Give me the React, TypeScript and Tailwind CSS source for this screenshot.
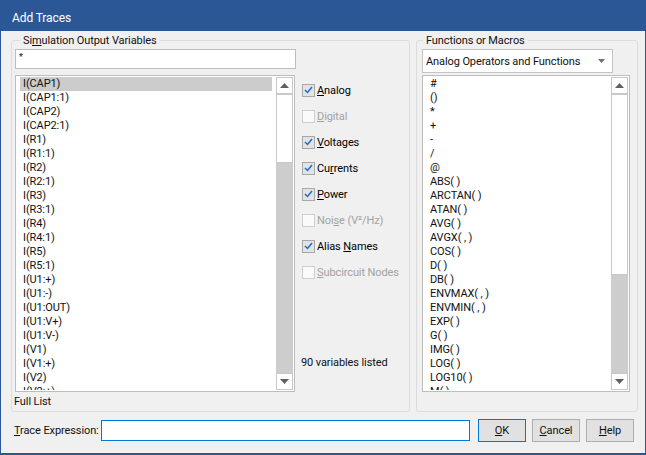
import React from "react";

const leftItems = [
  "I(CAP1)", "I(CAP1:1)", "I(CAP2)", "I(CAP2:1)", "I(R1)", "I(R1:1)", "I(R2)", "I(R2:1)",
  "I(R3)", "I(R3:1)", "I(R4)", "I(R4:1)", "I(R5)", "I(R5:1)", "I(U1:+)", "I(U1:-)",
  "I(U1:OUT)", "I(U1:V+)", "I(U1:V-)", "I(V1)", "I(V1:+)", "I(V2)", "I(V2:+)",
];

const rightItems = [
  "#", "()", "*", "+", "-", "/", "@", "ABS( )", "ARCTAN( )", "ATAN( )", "AVG( )", "AVGX( , )",
  "COS( )", "D( )", "DB( )", "ENVMAX( , )", "ENVMIN( , )", "EXP( )", "G( )", "IMG( )", "LOG( )",
  "LOG10( )", "M( )",
];

function UpArrow() {
  return (
    <svg width="9" height="5" viewBox="0 0 9 5">
      <path d="M0 5 L4.5 0 L9 5 Z" fill="#606060" />
    </svg>
  );
}
function DownArrow() {
  return (
    <svg width="9" height="5" viewBox="0 0 9 5">
      <path d="M0 0 L4.5 5 L9 0 Z" fill="#606060" />
    </svg>
  );
}

function ScrollBar({ thumbClass }: { thumbClass: string }) {
  return (
    <div className="w-[17px] h-full flex flex-col shrink-0">
      <div className="h-[17px] border border-[#c8c8c8] bg-white flex items-center justify-center shrink-0">
        <UpArrow />
      </div>
      <div className={`${thumbClass} border border-[#c8c8c8] bg-white shrink-0`} />
      <div className="flex-1 bg-[#cdcdcd]" />
      <div className="h-[17px] border border-[#c8c8c8] bg-white flex items-center justify-center shrink-0">
        <DownArrow />
      </div>
    </div>
  );
}

function Check({ checked, label }: { checked: boolean; label: React.ReactNode }) {
  return (
    <div className="h-[26px] flex items-center">
      <div
        className={
          checked
            ? "w-[13px] h-[13px] border border-[#a8a8a8] bg-[#e3e3e3] flex items-center justify-center"
            : "w-[13px] h-[13px] border border-[#cfcfcf] bg-[#fafafa]"
        }
      >
        {checked && (
          <svg width="9" height="8" viewBox="0 0 9 8">
            <path d="M1 4 L3.5 6.5 L8 1" stroke="#1a6fd0" strokeWidth="1.5" fill="none" />
          </svg>
        )}
      </div>
      <span className={checked ? "ml-[2px] text-black whitespace-nowrap" : "ml-[2px] text-[#a2a2a2] whitespace-nowrap"}>{label}</span>
    </div>
  );
}

export default function App() {
  return (
    <div className="w-[646px] h-[455px] bg-[#f0f0f0] border-l border-r border-b-2 border-[#2b5797] flex flex-col font-['Roboto',sans-serif] text-[11px] leading-[15px] tracking-[-0.1px] text-[#111] overflow-hidden">
      <div className="h-[31px] shrink-0 bg-[#2b5797] text-white text-[12px] pl-[11px] pt-[11px]">
        Add Traces
      </div>
      <div className="flex pl-[10px] pt-[2px] gap-[6px]">
        <fieldset className="w-[399px] h-[379px] border border-[#dcdcdc] rounded-[3px] shrink-0">
          <legend className="ml-[8px] px-[3px]">
            Si<span className="underline">m</span>ulation Output Variables
          </legend>
          <div className="pl-[3px] flex flex-col">
            <div className="mt-[1px] w-[281px] h-[20px] border border-[#bdbdbd] bg-white pl-[3px] text-[9px] leading-[14px]">
              *
            </div>
            <div className="mt-[6px] flex">
              <div className="flex flex-col">
                <div className="w-[280px] h-[317px] border border-[#bdbdbd] bg-white p-[1px] flex overflow-hidden">
                  <div className="flex-1 pl-[3px] pr-[4px] overflow-hidden">
                    {leftItems.map((t, i) => (
                      <div
                        key={t}
                        className={i === 0 ? "h-[14px] leading-[14px] pl-[3px] bg-[#cccccc]" : "h-[14px] leading-[14px] pl-[3px]"}
                      >
                        {t}
                      </div>
                    ))}
                  </div>
                  <ScrollBar thumbClass="h-[69px]" />
                </div>
                <div className="mt-[2px] -ml-[1px]">Full List</div>
              </div>
              <div className="ml-[7px] pt-[2px] flex flex-col">
                <Check checked label={<><span className="underline">A</span>nalog</>} />
                <Check checked={false} label={<><span className="underline">D</span>igital</>} />
                <Check checked label={<><span className="underline">V</span>oltages</>} />
                <Check checked label={<>Cu<span className="underline">r</span>rents</>} />
                <Check checked label={<><span className="underline">P</span>ower</>} />
                <Check checked={false} label={<>Noi<span className="underline">s</span>e (V²/Hz)</>} />
                <Check checked label={<>Alias <span className="underline">N</span>ames</>} />
                <Check checked={false} label={<><span className="underline">S</span>ubcircuit Nodes</>} />
                <div className="mt-[70px] -ml-[1px] whitespace-nowrap">90 variables listed</div>
              </div>
            </div>
          </div>
        </fieldset>
        <fieldset className="w-[222px] h-[379px] border border-[#dcdcdc] rounded-[3px] shrink-0">
          <legend className="ml-[6px] px-[3px]">Functions or Macros</legend>
          <div className="pl-[5px] flex flex-col">
            <div className="mt-[1px] w-[191px] h-[24px] border border-[#c4c4c4] bg-white flex items-center pl-[3px] pr-[7px]">
              <span className="flex-1 whitespace-nowrap">Analog Operators and Functions</span>
              <svg width="7" height="4" viewBox="0 0 7 4">
                <path d="M0 0 L3.5 4 L7 0 Z" fill="#707070" />
              </svg>
            </div>
            <div className="mt-[2px] w-[208px] h-[317px] border border-[#bdbdbd] bg-white p-[1px] flex overflow-hidden">
              <div className="flex-1 pl-[3px] pr-[4px] overflow-hidden">
                {rightItems.map((t) => (
                  <div key={t} className="h-[14px] leading-[14px] pl-[3px]">
                    {t}
                  </div>
                ))}
              </div>
              <ScrollBar thumbClass="h-[181px]" />
            </div>
          </div>
        </fieldset>
      </div>
      <div className="flex items-center pl-[13px] mt-[7px]">
        <div className="w-[87px] whitespace-nowrap">
          <span className="underline">T</span>race Expression:
        </div>
        <div className="w-[369px] h-[21px] border border-[#0078d7] bg-white" />
        <div className="ml-[8px] w-[48px] h-[23px] border border-[#0078d7] bg-[#e1e1e1] flex items-center justify-center">
          <span><span className="underline">O</span>K</span>
        </div>
        <div className="ml-[6px] w-[48px] h-[23px] border border-[#adadad] bg-[#e1e1e1] flex items-center justify-center">
          <span><span className="underline">C</span>ancel</span>
        </div>
        <div className="ml-[6px] w-[48px] h-[23px] border border-[#adadad] bg-[#e1e1e1] flex items-center justify-center">
          <span><span className="underline">H</span>elp</span>
        </div>
      </div>
    </div>
  );
}
